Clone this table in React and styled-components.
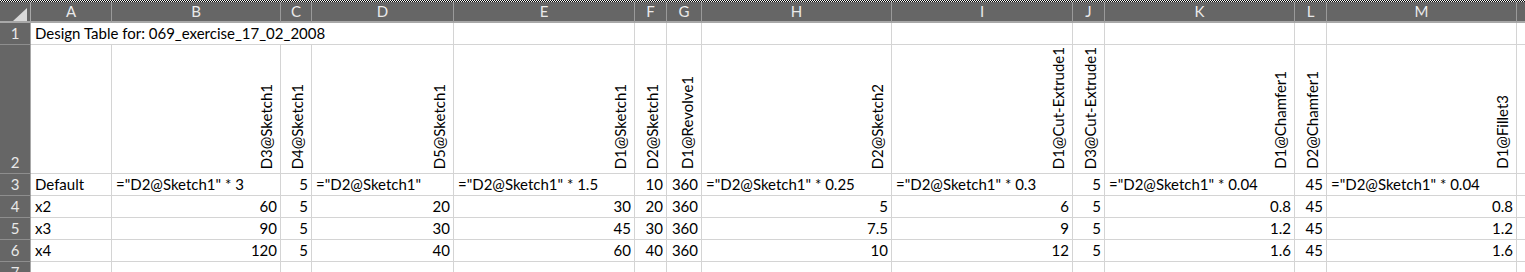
import React from "react";
import styled, { createGlobalStyle } from "styled-components";

const Global = createGlobalStyle`
  html, body { margin: 0; padding: 0; background: #fff; overflow: hidden; }
  body { font-family: Lato, "Open Sans", sans-serif; }
`;

const COLS = [81, 169, 31, 142, 181, 32, 35, 190, 181, 32, 190, 32, 190];
const LETTERS = ["A","B","C","D","E","F","G","H","I","J","K","L","M","N"];

const Sheet = styled.div`
  display: grid;
  grid-template-columns: 31px ${COLS.map((c) => c + "px").join(" ")} 64px;
  grid-template-rows: 2px 21px 22px 129px 22px 22px 22px 22px 22px;
  width: 1525px;
  overflow: hidden;
  font-size: 15px;
  color: #000;
`;

const Ants = styled.div`
  grid-column: 1 / -1;
  background: repeating-conic-gradient(#000 0 25%, #fff 0 50%) 0 0 / 2px 2px;
`;

const ColHead = styled.div`
  box-sizing: border-box;
  background: #666666;
  color: #e9e9e9;
  border-right: 1px solid #9a9a9a;
  border-bottom: 2px solid #a8a8a8;
  display: flex;
  align-items: center;
  justify-content: center;
  font-size: 15px;
  padding-bottom: 1px;
`;

const Corner = styled(ColHead)`
  position: relative;
  border-right: 1px solid #a8a8a8;
`;

const Triangle = styled.span`
  position: absolute;
  left: 13px;
  top: 6px;
  width: 14px;
  height: 13px;
  background: #d9d9d9;
  clip-path: polygon(100% 0, 100% 100%, 0 100%);
`;

const RowHead = styled.div`
  box-sizing: border-box;
  background: #666666;
  color: #e9e9e9;
  border-right: 1px solid #a8a8a8;
  border-bottom: 1px solid #8e8e8e;
  display: flex;
  align-items: flex-end;
  justify-content: center;
  padding-bottom: 1px;
  line-height: 20px;
`;

const Cell = styled.div`
  box-sizing: border-box;
  border-right: 1px solid #d4d4d4;
  border-bottom: 1px solid #d4d4d4;
  display: flex;
  align-items: flex-end;
  justify-content: ${(p) => (p.$right ? "flex-end" : "flex-start")};
  padding: 0 ${(p) => (p.$right ? "3px" : "0")} 1px ${(p) => (p.$right ? "0" : "4px")};
  line-height: 20px;
  white-space: nowrap;
  grid-column: ${(p) => (p.$span ? `span ${p.$span}` : "auto")};
`;

const VCell = styled(Cell)`
  justify-content: flex-end;
  padding: 0 4px 4px 0;
`;

const VText = styled.span`
  writing-mode: vertical-rl;
  transform: rotate(180deg);
  line-height: 20px;
`;

const headers2 = ["", "D3@Sketch1", "D4@Sketch1", "D5@Sketch1", "D1@Sketch1", "D2@Sketch1", "D1@Revolve1", "D2@Sketch2", "D1@Cut-Extrude1", "D3@Cut-Extrude1", "D1@Chamfer1", "D2@Chamfer1", "D1@Fillet3"];

const f = (s) => ({ t: `="D2@Sketch1"${s}`, r: false });
const n = (v) => ({ t: String(v), r: true });
const l = (v) => ({ t: v, r: false });

const dataRows = [
  [l("Default"), f(" * 3"), n(5), f(""), f(" * 1.5"), n(10), n(360), f(" * 0.25"), f(" * 0.3"), n(5), f(" * 0.04"), n(45), f(" * 0.04")],
  [l("x2"), n(60), n(5), n(20), n(30), n(20), n(360), n(5), n(6), n(5), n(0.8), n(45), n(0.8)],
  [l("x3"), n(90), n(5), n(30), n(45), n(30), n(360), n(7.5), n(9), n(5), n(1.2), n(45), n(1.2)],
  [l("x4"), n(120), n(5), n(40), n(60), n(40), n(360), n(10), n(12), n(5), n(1.6), n(45), n(1.6)],
];

export default function App() {
  return (
    <>
      <Global />
      <Sheet>
        <Ants />
        <Corner><Triangle /></Corner>
        {LETTERS.map((c) => (
          <ColHead key={c}>{c}</ColHead>
        ))}

        <RowHead>1</RowHead>
        <Cell $span={4}>Design Table for: 069_exercise_17_02_2008</Cell>
        {LETTERS.slice(4).map((c) => (
          <Cell key={c} />
        ))}

        <RowHead>2</RowHead>
        {headers2.map((h, i) => (
          <VCell key={i}>{h && <VText>{h}</VText>}</VCell>
        ))}
        <Cell />

        {dataRows.map((row, ri) => (
          <React.Fragment key={ri}>
            <RowHead>{ri + 3}</RowHead>
            {row.map((c, ci) => (
              <Cell key={ci} $right={c.r}>{c.t}</Cell>
            ))}
            <Cell />
          </React.Fragment>
        ))}

        <RowHead>7</RowHead>
        {LETTERS.map((c) => (
          <Cell key={c} />
        ))}
      </Sheet>
    </>
  );
}
